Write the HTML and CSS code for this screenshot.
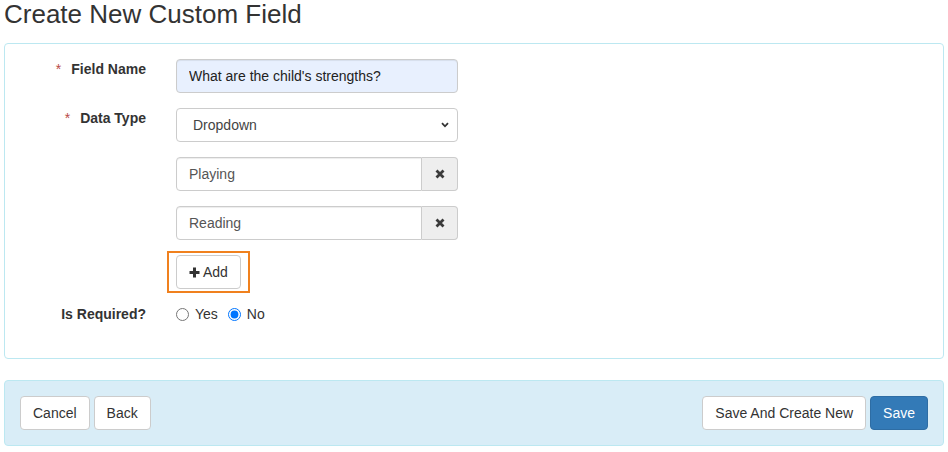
FILE: index.html
```html
<!DOCTYPE html>
<html lang="en">
<head>
<meta charset="utf-8">
<title>Create New Custom Field</title>
<link rel="stylesheet" href="styles.css">
</head>
<body>
<h1 class="page-title">Create New Custom Field</h1>

<div class="panel">
  <div class="form-grid">
    <label class="control-label"><span class="req">*</span>Field Name</label>
    <div class="field"><input class="form-control autofilled" type="text" value="What are the child's strengths?"></div>

    <label class="control-label"><span class="req">*</span>Data Type</label>
    <div class="field">
      <div class="form-control select">
        <span>Dropdown</span>
        <svg class="chevron" width="8" height="6" viewBox="0 0 8 6"><path d="M1 1.2 L4 4.3 L7 1.2" fill="none" stroke="#333" stroke-width="1.8"/></svg>
      </div>
    </div>

    <div class="control-label"></div>
    <div class="field">
      <div class="input-group">
        <input class="form-control group-input" type="text" value="Playing">
        <span class="addon"><svg width="10" height="10" viewBox="0 0 10 10"><path d="M1.5 1.5 L8.5 8.5 M8.5 1.5 L1.5 8.5" stroke="#3a3a3a" stroke-width="2.8" stroke-linecap="butt"/></svg></span>
      </div>
    </div>

    <div class="control-label"></div>
    <div class="field">
      <div class="input-group">
        <input class="form-control group-input" type="text" value="Reading">
        <span class="addon"><svg width="10" height="10" viewBox="0 0 10 10"><path d="M1.5 1.5 L8.5 8.5 M8.5 1.5 L1.5 8.5" stroke="#3a3a3a" stroke-width="2.8" stroke-linecap="butt"/></svg></span>
      </div>
    </div>

    <div class="control-label"></div>
    <div class="field">
      <span class="highlight">
        <button class="btn btn-default btn-add" type="button"><svg class="plus" width="11" height="11" viewBox="0 0 11 11"><path d="M5.5 0.5 V10.5 M0.5 5.5 H10.5" stroke="#333" stroke-width="3"/></svg>Add</button>
      </span>
    </div>

    <label class="control-label">Is Required?</label>
    <div class="field radios">
      <label class="radio"><input type="radio" name="req"> Yes</label>
      <label class="radio"><input type="radio" name="req" checked> No</label>
    </div>
  </div>
</div>

<div class="footer">
  <div class="btn-row">
    <button class="btn btn-default" type="button">Cancel</button>
    <button class="btn btn-default" type="button">Back</button>
  </div>
  <div class="btn-row">
    <button class="btn btn-default" type="button">Save And Create New</button>
    <button class="btn btn-primary" type="button">Save</button>
  </div>
</div>
</body>
</html>
```

FILE: styles.css
```css
* { box-sizing: border-box; }

html, body {
  background: #fff;
}

body {
  margin: 0 4px;
  font-family: "Liberation Sans", Arial, Helvetica, sans-serif;
  font-size: 14px;
  line-height: 20px;
  color: #333;
}

.page-title {
  margin: 0 0 14px;
  font-size: 26px;
  line-height: 29px;
  font-weight: normal;
  color: #333;
}

.panel {
  border: 1px solid #bce8f1;
  border-radius: 4px;
  background: #fff;
  padding: 15px 0 34px;
  margin-bottom: 21px;
}

.form-grid {
  display: grid;
  grid-template-columns: 156px 312px;
  row-gap: 15px;
}

.control-label {
  text-align: right;
  padding-right: 15px;
  font-weight: bold;
  color: #333;
  line-height: 20px;
}

.req {
  color: #b94a48;
  font-weight: normal;
  margin-right: 10px;
}

.field {
  padding: 0 15px;
}

.form-control {
  display: block;
  width: 100%;
  height: 34px;
  padding: 6px 12px;
  font-family: inherit;
  font-size: 14px;
  line-height: 20px;
  color: #555;
  background: #fff;
  border: 1px solid #ccc;
  border-radius: 4px;
  box-shadow: inset 0 1px 1px rgba(0,0,0,.075);
  outline: none;
}

.autofilled {
  background: #e8f0fe;
  color: #222;
}

.select {
  display: flex;
  align-items: center;
  justify-content: space-between;
  padding: 6px 8px 6px 16px;
  color: #444;
  box-shadow: none;
}

.chevron {
  display: block;
}

.input-group {
  display: flex;
}

.group-input {
  flex: 1;
  min-width: 0;
  border-radius: 4px 0 0 4px;
}

.addon {
  width: 36px;
  height: 34px;
  flex: none;
  display: flex;
  align-items: center;
  justify-content: center;
  background: #eee;
  border: 1px solid #ccc;
  border-left: 0;
  border-radius: 0 4px 4px 0;
}

.highlight {
  position: relative;
  display: inline-block;
  vertical-align: top;
}

.highlight::after {
  content: "";
  position: absolute;
  top: -4px;
  bottom: -4px;
  left: -9px;
  right: -9px;
  border: 2px solid #f0811e;
  pointer-events: none;
}

.btn {
  display: inline-block;
  height: 34px;
  padding: 6px 12px;
  font-family: inherit;
  font-size: 14px;
  line-height: 20px;
  border: 1px solid #ccc;
  border-radius: 4px;
  background: #fff;
  color: #333;
  cursor: pointer;
  white-space: nowrap;
}

.btn-add {
  display: inline-flex;
  align-items: center;
  padding: 6px 12px 6px 12px;
}

.plus {
  display: block;
  margin-right: 3px;
}

.btn-primary {
  background: #337ab7;
  border-color: #2e6da4;
  color: #fff;
}

.radios {
  display: flex;
  align-items: center;
  height: 20px;
}

.radio {
  display: flex;
  align-items: center;
  font-weight: normal;
  color: #333;
  margin-right: 10px;
}

.radio input {
  margin: 0 6px 0 0;
  width: 13px;
  height: 13px;
}

.footer {
  display: flex;
  justify-content: space-between;
  align-items: center;
  background: #d9edf7;
  border: 1px solid #bce8f1;
  border-radius: 4px;
  padding: 15px;
}

.btn-row {
  display: flex;
  gap: 4px;
}
```
